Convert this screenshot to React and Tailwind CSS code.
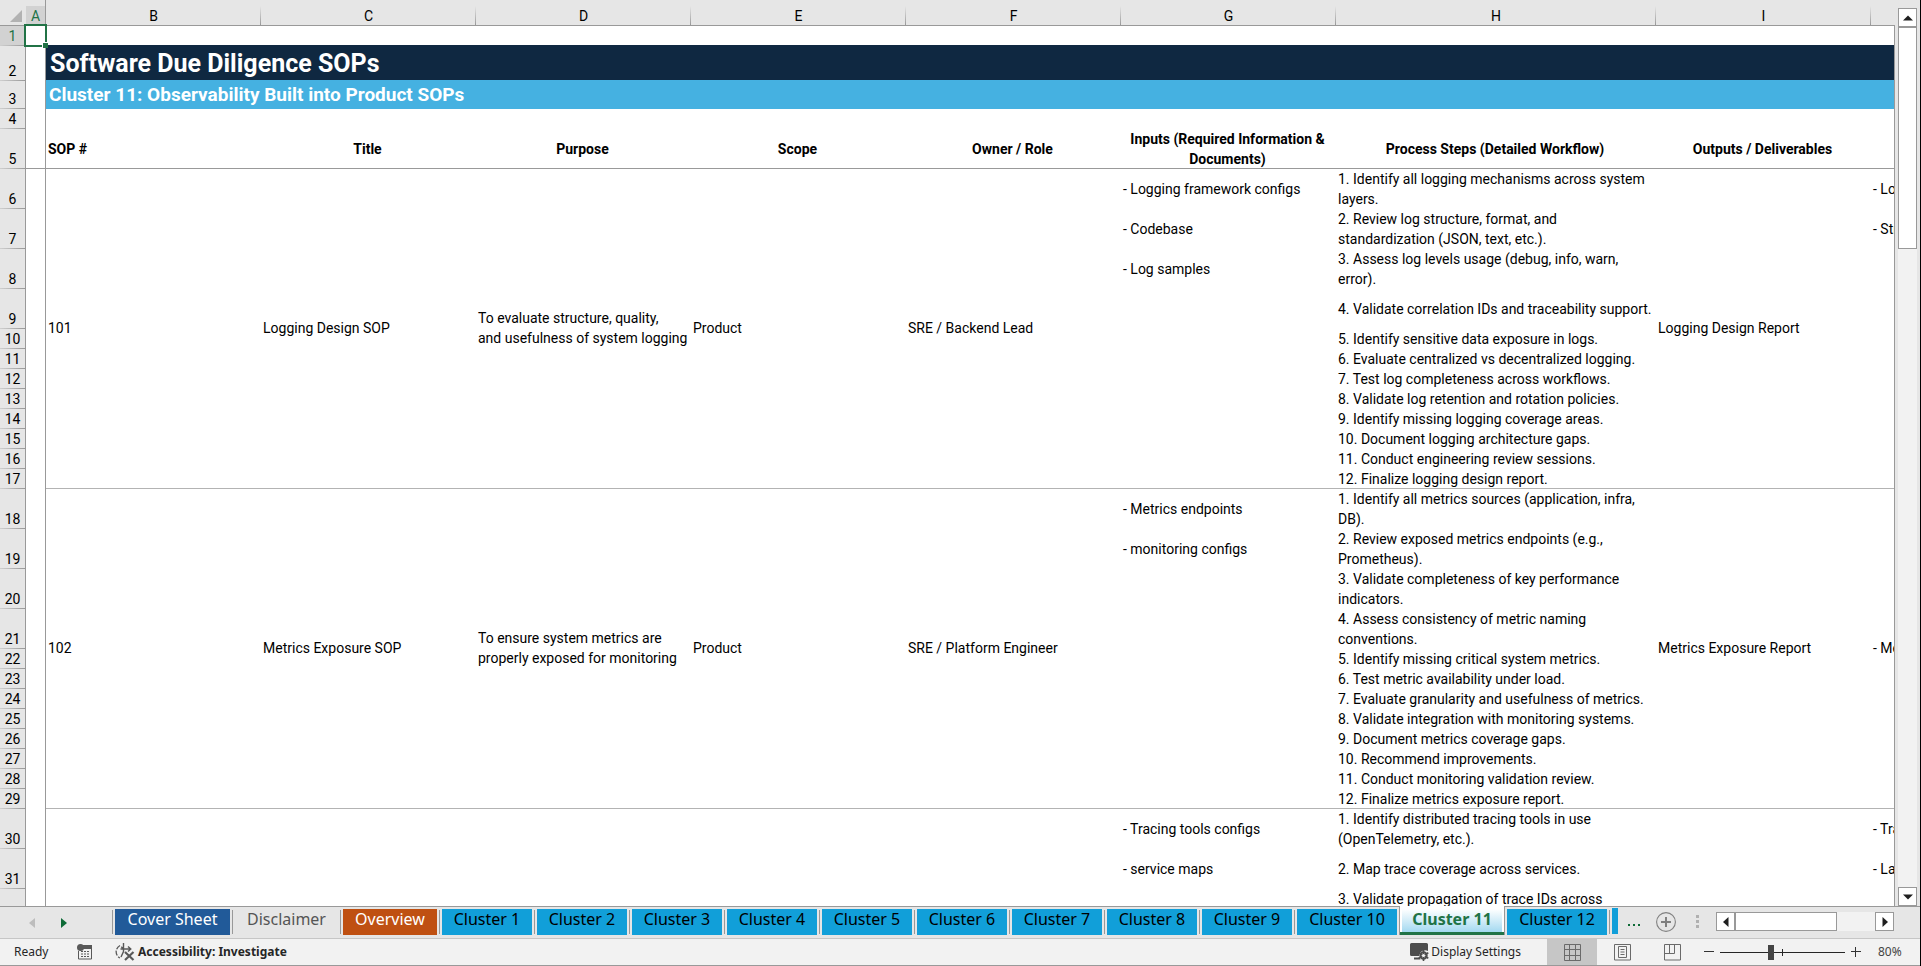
import { useState } from 'react'
import clsx from 'clsx'

const columns = [
  { name: 'B', label: 'SOP #' },
  { name: 'C', label: 'Title' },
  { name: 'D', label: 'Purpose' },
  { name: 'E', label: 'Scope' },
  { name: 'F', label: 'Owner / Role' },
  { name: 'G', label: 'Inputs (Required Information &\nDocuments)' },
  { name: 'H', label: 'Process Steps (Detailed Workflow)' },
  { name: 'I', label: 'Outputs / Deliverables' },
]

const sops = [
  {
    firstRow: 6,
    id: '101',
    title: 'Logging Design SOP',
    purpose: 'To evaluate structure, quality,\nand usefulness of system logging',
    scope: 'Product',
    owner: 'SRE / Backend Lead',
    output: 'Logging Design Report',
    inputs: ['- Logging framework configs', '- Codebase', '- Log samples'],
    evidence: ['- Lo', '- Str'],
    steps: [
      '1. Identify all logging mechanisms across system\nlayers.',
      '2. Review log structure, format, and\nstandardization (JSON, text, etc.).',
      '3. Assess log levels usage (debug, info, warn,\nerror).',
      '4. Validate correlation IDs and traceability support.',
      '5. Identify sensitive data exposure in logs.',
      '6. Evaluate centralized vs decentralized logging.',
      '7. Test log completeness across workflows.',
      '8. Validate log retention and rotation policies.',
      '9. Identify missing logging coverage areas.',
      '10. Document logging architecture gaps.',
      '11. Conduct engineering review sessions.',
      '12. Finalize logging design report.',
    ],
  },
  {
    firstRow: 18,
    id: '102',
    title: 'Metrics Exposure SOP',
    purpose: 'To ensure system metrics are\nproperly exposed for monitoring',
    scope: 'Product',
    owner: 'SRE / Platform Engineer',
    output: 'Metrics Exposure Report',
    inputs: ['- Metrics endpoints', '- monitoring configs'],
    mergedEvidence: '- Me',
    steps: [
      '1. Identify all metrics sources (application, infra,\nDB).',
      '2. Review exposed metrics endpoints (e.g.,\nPrometheus).',
      '3. Validate completeness of key performance\nindicators.',
      '4. Assess consistency of metric naming\nconventions.',
      '5. Identify missing critical system metrics.',
      '6. Test metric availability under load.',
      '7. Evaluate granularity and usefulness of metrics.',
      '8. Validate integration with monitoring systems.',
      '9. Document metrics coverage gaps.',
      '10. Recommend improvements.',
      '11. Conduct monitoring validation review.',
      '12. Finalize metrics exposure report.',
    ],
  },
  {
    firstRow: 30,
    inputs: ['- Tracing tools configs', '- service maps'],
    evidence: ['- Tra', '- La'],
    steps: [
      '1. Identify distributed tracing tools in use\n(OpenTelemetry, etc.).',
      '2. Map trace coverage across services.',
      '3. Validate propagation of trace IDs across\n\u00a0',
    ],
  },
]

const tabs = [
  { name: 'Cover Sheet', style: 'w-[115px] bg-[#215a99] text-white' },
  { name: 'Disclaimer', style: 'w-[103px] text-[#555]' },
  { name: 'Overview', style: 'w-[94px] bg-[#bf5012] text-white' },
  ...[1, 2, 3, 4, 5, 6, 7, 8, 9].map((n) => ({ name: `Cluster ${n}`, style: 'w-[90px] bg-[#119fd9] text-black' })),
  ...[10, 11, 12].map((n) => ({ name: `Cluster ${n}`, style: 'w-[100px] bg-[#119fd9] text-black' })),
]

function RowNumber({ n, active }) {
  return (
    <th
      scope="row"
      className={clsx(
        'p-0 align-bottom text-center font-normal leading-5 border-r border-[#999] bg-[linear-gradient(to_right,#cfcfcf,#999)] bg-bottom bg-no-repeat bg-[length:100%_1px]',
        active ? 'bg-[#d2d2d2] text-[#217346]' : 'bg-[#e6e6e6] text-black'
      )}
    >
      {n}
    </th>
  )
}

function SopRows({ sop }) {
  const span = sop.steps.length
  const merged = 'p-0 pl-[2px] pb-[2px] align-middle whitespace-pre shadow-[inset_0_-1px_0_#b3b3b3]'

  return sop.steps.map((step, i) => {
    const last = i === span - 1 && span === 12
    const cell = clsx('p-0 pl-[2px] align-middle whitespace-pre overflow-hidden', last && 'shadow-[inset_0_-1px_0_#b3b3b3]')
    // steps and inputs sit in single rows, everything else spans the whole SOP
    return (
      <tr key={step} className={i < 4 ? 'h-[40px]' : 'h-[20px]'}>
        <RowNumber n={sop.firstRow + i} />
        <td className="p-0 border-r border-[#999]" />
        {i === 0 && (
          <>
            <td rowSpan={span} className={merged}>{sop.id}</td>
            <td rowSpan={span} className={merged}>{sop.title}</td>
            <td rowSpan={span} className={merged}>{sop.purpose}</td>
            <td rowSpan={span} className={merged}>{sop.scope}</td>
            <td rowSpan={span} className={merged}>{sop.owner}</td>
          </>
        )}
        <td className={cell}>{sop.inputs[i]}</td>
        <td className={cell}>{step}</td>
        {i === 0 && <td rowSpan={span} className={merged}>{sop.output}</td>}
        {sop.mergedEvidence
          ? i === 0 && <td rowSpan={span} className={clsx(merged, 'overflow-hidden')}>{sop.mergedEvidence}</td>
          : <td className={cell}>{sop.evidence[i]}</td>}
      </tr>
    )
  })
}

function Sheet() {
  return (
    <table className="w-full min-w-[1890px] table-fixed border-separate border-spacing-0 text-[14px] leading-5 text-black">
      <colgroup>
        <col className="w-[26px]" />
        <col className="w-[20px]" />
        <col className="w-[215px]" />
        <col className="w-[215px]" />
        <col className="w-[215px]" />
        <col className="w-[215px]" />
        <col className="w-[215px]" />
        <col className="w-[215px]" />
        <col className="w-[320px]" />
        <col className="w-[215px]" />
        <col />
      </colgroup>
      <thead>
        <tr className="h-[26px] bg-[#e6e6e6]">
          <td className="p-0 align-bottom border-b border-[#999]">
            <svg className="block ml-[10px] mb-[3px]" width="12" height="12" viewBox="0 0 12 12" fill="#b2b2b2">
              <path d="M12 0v12H0z" />
            </svg>
          </td>
          <th scope="col" className="p-0 pt-[6px] align-top font-normal leading-5 text-[#217346] border-b border-r border-[#999] bg-[linear-gradient(#e6e6e6_6px,#d2d2d2_6px)]">
            <span className="block h-[19px]">A</span>
          </th>
          {columns.map((c) => (
            <th
              key={c.name}
              scope="col"
              className="p-0 pt-[6px] align-top font-normal leading-5 border-b border-[#999] bg-[linear-gradient(#e6e6e6_6px,#999)] bg-right bg-no-repeat bg-[length:1px_100%]"
            >
              <span className="block h-[19px]">{c.name}</span>
            </th>
          ))}
          <td className="p-0 border-b border-[#999]" />
        </tr>
      </thead>
      <tbody>
        <tr className="h-[20px]">
          <RowNumber n={1} active />
          <td className="relative p-0 border-r border-[#999]">
            <div className="absolute -left-[2px] -top-[2px] w-[23px] h-[23px] border-2 border-[#217346]">
              <span className="absolute -right-[3px] -bottom-[3px] w-[6px] h-[6px] bg-[#217346] border-l border-t border-white" />
            </div>
          </td>
          <td colSpan={9} className="p-0" />
        </tr>
        <tr className="h-[35px]">
          <RowNumber n={2} />
          <td className="p-0 border-r border-[#999]" />
          <td colSpan={9} className="p-0 pl-1 align-middle bg-[#0f2841] shadow-[0_-1px_0_#0f2841] font-bold text-[25px] leading-[34px] text-white">
            Software Due Diligence SOPs
          </td>
        </tr>
        <tr className="h-[28px]">
          <RowNumber n={3} />
          <td className="p-0 border-r border-[#999]" />
          <td colSpan={9} className="p-0 pl-[3px] align-middle bg-[#45b1e1] shadow-[0_-1px_0_#45b1e1] font-bold text-[19px] leading-[26px] text-white">
            Cluster 11: Observability Built into Product SOPs
          </td>
        </tr>
        <tr className="h-[20px]">
          <RowNumber n={4} />
          <td className="p-0 border-r border-[#999]" />
          <td colSpan={9} className="p-0" />
        </tr>
        <tr className="h-[40px]">
          <RowNumber n={5} />
          <td className="p-0 border-r border-[#999] shadow-[inset_0_-1px_0_#999]" />
          {columns.map((c) => (
            <th
              key={c.name}
              scope="col"
              className={clsx(
                'p-0 align-middle font-bold whitespace-pre shadow-[inset_0_-1px_0_#999]',
                c.name === 'B' ? 'pl-[2px] text-left' : 'pr-[2px] text-center'
              )}
            >
              {c.label}
            </th>
          ))}
          <td className="p-0 shadow-[inset_0_-1px_0_#999]" />
        </tr>
        {sops.map((sop) => <SopRows key={sop.firstRow} sop={sop} />)}
      </tbody>
    </table>
  )
}

function ScrollButton({ label, path }) {
  return (
    <button aria-label={label} className="w-[19px] h-[19px] shrink-0 flex items-center justify-center bg-white border border-[#999]">
      <svg width="10" height="10" viewBox="0 0 10 10" fill="#1f1f1f">
        <path d={path} />
      </svg>
    </button>
  )
}

function SheetTabs() {
  const [active, setActive] = useState('Cluster 11')

  return (
    <div className="h-[32px] shrink-0 flex bg-[#e6e6e6] text-[16px] font-['Noto_Sans',sans-serif]">
      <div className="w-[112px] shrink-0 flex items-center gap-[26px] pl-[29px] border-t border-[#999]">
        <button aria-label="Previous sheet">
          <svg width="6" height="10" viewBox="0 0 6 10" fill="#bdbdbd"><path d="M6 0v10L0 5z" /></svg>
        </button>
        <button aria-label="Next sheet">
          <svg width="6" height="10" viewBox="0 0 6 10" fill="#0e6b37"><path d="M0 0v10l6-5z" /></svg>
        </button>
      </div>
      {tabs.map((tab, i) => {
        const isActive = tab.name === active
        const nextToActive = i > 0 && tabs[i - 1].name === active
        return (
          <div
            key={tab.name}
            className={clsx(
              'shrink-0 flex',
              isActive ? 'bg-white border-l border-[#999] h-[29px]' : 'border-t border-[#999]'
            )}
          >
            {!isActive && <span className={clsx('w-px bg-[#999]', nextToActive ? 'h-[28px]' : 'mt-[3px] h-[24px]')} />}
            <div className={clsx('px-[2px]', isActive ? 'pt-[3px] border-b-[3px] border-[#217346]' : 'pt-[2px]')}>
              <button
                onClick={() => setActive(tab.name)}
                className={clsx(
                  'block whitespace-nowrap text-center leading-[20px]',
                  isActive
                    ? 'w-[100px] h-[23px] pb-[3px] bg-linear-to-b from-white to-[#a3d9f0] font-bold text-[#217346]'
                    : ['h-[26px] pb-[6px]', tab.style]
                )}
              >
                {tab.name}
              </button>
            </div>
          </div>
        )
      })}
      <div className="flex-1 min-w-0 flex items-center border-t border-[#999] pr-[26px] pb-[2px]">
        <span className="w-px h-[24px] bg-[#999]" />
        <span className="w-[6px] h-[26px] mb-px ml-[2px] bg-[#119fd9]" />
        <button aria-label="More sheets" className="ml-[10px] flex gap-[3px] mt-[6px]">
          <span className="w-[2px] h-[2px] bg-[#0e6b37]" />
          <span className="w-[2px] h-[2px] bg-[#0e6b37]" />
          <span className="w-[2px] h-[2px] bg-[#0e6b37]" />
        </button>
        <button aria-label="New sheet" className="ml-[16px]">
          <svg width="20" height="20" viewBox="0 0 20 20" fill="none" stroke="#808080">
            <circle cx="10" cy="10" r="9.4" strokeWidth="1.1" />
            <path d="M10 5v10M5 10h10" strokeWidth="2" />
          </svg>
        </button>
        <div className="ml-auto mr-[17px] flex flex-col gap-[2px]">
          <span className="w-[3px] h-[3px] bg-[#b0b0b0]" />
          <span className="w-[3px] h-[3px] bg-[#b0b0b0]" />
          <span className="w-[3px] h-[3px] bg-[#b0b0b0]" />
        </div>
        <div className="w-[178px] shrink-0 flex bg-[#f2f2f2]">
          <ScrollButton label="Scroll left" path="M7.5 0v10L2 5z" />
          <div className="w-[102px] h-[19px] bg-white border border-[#999]" />
          <div className="ml-auto">
            <ScrollButton label="Scroll right" path="M2.500 0v10L8 5z" />
          </div>
        </div>
      </div>
    </div>
  )
}

function StatusBar() {
  const [zoom, setZoom] = useState(40)

  return (
    <div className="h-[28px] shrink-0 flex items-center bg-[#f2f2f2] border-t border-[#c6c6c6] border-b border-b-[#999] text-[12px] text-[#262626] font-['Noto_Sans',sans-serif]">
      <span className="w-[63px] pl-[14px]">Ready</span>
      <button aria-label="Record macro" className="ml-[14px]">
        <svg className="block" width="16" height="16" viewBox="0 0 16 16" fill="#595959">
          <path d="M6 1h9v4H6z" />
          <circle cx="3.500" cy="3.500" r="3.500" />
          <path d="M1.500 7v8h13V5" fill="none" stroke="#595959" />
          <path d="M4 7h2v1H4zM7 7h2v1H7zM10 7h2v1h-2zM4 9.500h2v1H4zM7 9.500h2v1H7zM10 9.500h2v1h-2zM4 12h2v1H4zM7 12h2v1H7zM10 12h2v1h-2z" />
        </svg>
      </button>
      <button className="ml-[22px] flex items-center gap-[3px] font-bold">
        <svg width="20" height="18" viewBox="0 0 20 18" fill="none" stroke="#595959">
          <path d="M5 2.500A7 7 0 0 0 5 15" strokeWidth="1.300" strokeDasharray="5 1.500" />
          <path d="M8.500 0v8.500L6 14M5.500 6h10M13 3.500L15.800 6 13 8.500M6.300 3.800L8.500 6" strokeWidth="1.400" />
          <path d="M10 9l8.500 8M18.500 9L10 17" strokeWidth="2.200" />
        </svg>
        Accessibility: Investigate
      </button>
      <div className="ml-auto flex items-center h-full">
        <button className="flex items-center gap-[2px] whitespace-nowrap">
          <svg width="19" height="18" viewBox="0 0 19 18" fill="#4d4d4d">
            <path d="M0 1.500Q0 0 1.500 0h15Q18 0 18 1.500V8a6 6 0 0 0-9 5H1.500Q0 13 0 11.500zM4 14.500h5.500l1 2H4z" />
            <circle cx="13.500" cy="12.500" r="3.200" fill="none" stroke="#4d4d4d" strokeWidth="2" />
            <path d="M13.500 7v11M8.700 9.800l9.600 5.400M8.700 15.200l9.600-5.400" fill="none" stroke="#4d4d4d" strokeWidth="1.600" />
            <circle cx="13.500" cy="12.500" r="1.600" fill="#f2f2f2" />
          </svg>
          Display Settings
        </button>
        <button aria-label="Normal view" className="ml-[26px] w-[50px] h-full flex items-center justify-center bg-[#c6c6c6]">
          <svg width="17" height="17" viewBox="0 0 17 17" fill="none" stroke="#6a6a6a">
            <path d="M.5.5h16v16H.5zM5.500.5v16M11.500.5v16M.5 5.500h16M.5 11.500h16" />
          </svg>
        </button>
        <button aria-label="Page layout view" className="w-[50px] h-full flex items-center justify-center">
          <svg width="17" height="17" viewBox="0 0 17 17" fill="none" stroke="#6a6a6a">
            <path d="M.5.5h16v15.500H.5zM4.500 2.500h8v11h-8zM6.500 5.500h4M6.500 8h4M6.500 10.500h4" />
          </svg>
        </button>
        <button aria-label="Page break preview" className="w-[50px] h-full flex items-center justify-center">
          <svg width="17" height="17" viewBox="0 0 17 17" fill="none" stroke="#6a6a6a">
            <path d="M.5.5h16v15.500H.5zM5.500.5v9M10.500.5v9M.5 9.500h10" />
          </svg>
        </button>
        <button aria-label="Zoom out" className="ml-[7px]">
          <svg width="10" height="10" viewBox="0 0 10 10" stroke="#333"><path d="M0 4.500h10" /></svg>
        </button>
        <input
          type="range"
          aria-label="Zoom"
          min="0"
          max="100"
          value={zoom}
          onChange={(e) => setZoom(Number(e.target.value))}
          className="ml-[6px] w-[125px] h-[15px] appearance-none bg-no-repeat bg-center bg-[linear-gradient(#262626,#262626),linear-gradient(#262626,#262626)] bg-[length:100%_1px,1px_7px] [&::-webkit-slider-thumb]:appearance-none [&::-webkit-slider-thumb]:w-[6px] [&::-webkit-slider-thumb]:h-[15px] [&::-webkit-slider-thumb]:bg-[#444]"
        />
        <button aria-label="Zoom in" className="ml-[6px]">
          <svg width="10" height="10" viewBox="0 0 10 10" stroke="#333"><path d="M0 4.500h10M4.500 0v10" /></svg>
        </button>
        <span className="w-[59px] pl-[17px] text-[#444]">80%</span>
      </div>
    </div>
  )
}

export default function App() {
  return (
    <div className="h-screen flex flex-col overflow-hidden bg-[#e6e6e6] border-r border-black font-[Roboto,sans-serif]">
      <div className="flex-1 min-h-0 flex">
        <div className="flex-1 min-w-0 overflow-hidden bg-white">
          <Sheet />
        </div>
        <div className="w-[26px] shrink-0 flex flex-col pt-[8px] pl-[4px] pr-[3px] shadow-[inset_1px_0_0_#999] relative">
          {/* covers the sheet edge line beside the column letters */}
          <span className="absolute left-0 top-0 w-px h-[25px] bg-[#e6e6e6]" />
          <ScrollButton label="Scroll up" path="M0 7.500h10L5 2.500z" />
          <div className="flex-1 bg-[#f2f2f2]">
            <div className="h-[222px] bg-white border border-[#999]" />
          </div>
          <ScrollButton label="Scroll down" path="M0 2.500h10L5 7.500z" />
        </div>
      </div>
      <SheetTabs />
      <StatusBar />
    </div>
  )
}
